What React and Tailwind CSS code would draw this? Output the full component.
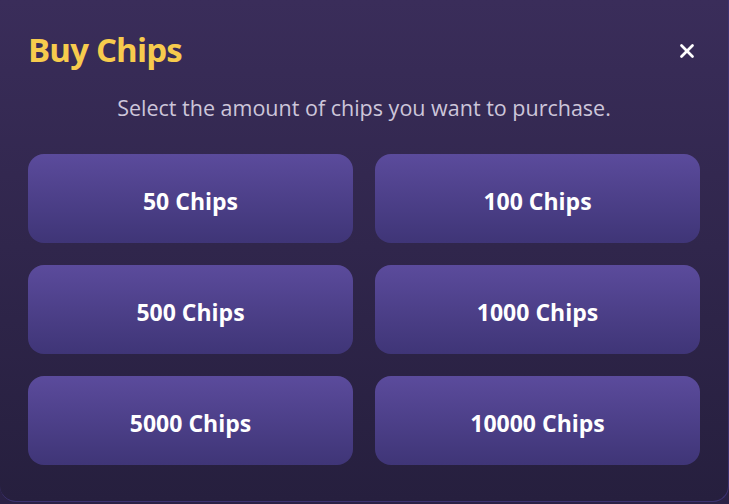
import { X } from "lucide-react";

const amounts = [50, 100, 500, 1000, 5000, 10000];

export default function App() {
  return (
    <div className="w-[729px] h-[504px] overflow-hidden bg-[#2a2145]" style={{ fontFamily: '"Open Sans", "Noto Sans", sans-serif' }}>
      <div className="w-[729px] h-[502px] rounded-b-2xl border-r border-b border-[#3d3270] bg-gradient-to-b from-[#3a2d5a] to-[#261f3e] px-[28px] pt-[28px]">
        <div className="flex items-center justify-between h-[44px]">
          <h2 className="text-[33px] leading-[44px] font-bold text-[#f7cb4d] tracking-tight">Buy Chips</h2>
          <button className="text-white mr-[2px] mt-[2px]">
            <X className="w-[22px] h-[22px]" strokeWidth={3} />
          </button>
        </div>
        <p className="mt-[22px] h-[28px] leading-[28px] text-center text-[21.5px] text-[#cdc6da]">
          Select the amount of chips you want to purchase.
        </p>
        <div className="mt-[32px] grid grid-cols-2 gap-[22px] w-[672px]">
          {amounts.map((a) => (
            <button
              key={a}
              className="h-[89px] pt-[5px] rounded-2xl bg-gradient-to-b from-[#5b4b9c] to-[#3f3577] text-white text-[23px] font-bold"
            >
              {a} Chips
            </button>
          ))}
        </div>
      </div>
    </div>
  );
}
